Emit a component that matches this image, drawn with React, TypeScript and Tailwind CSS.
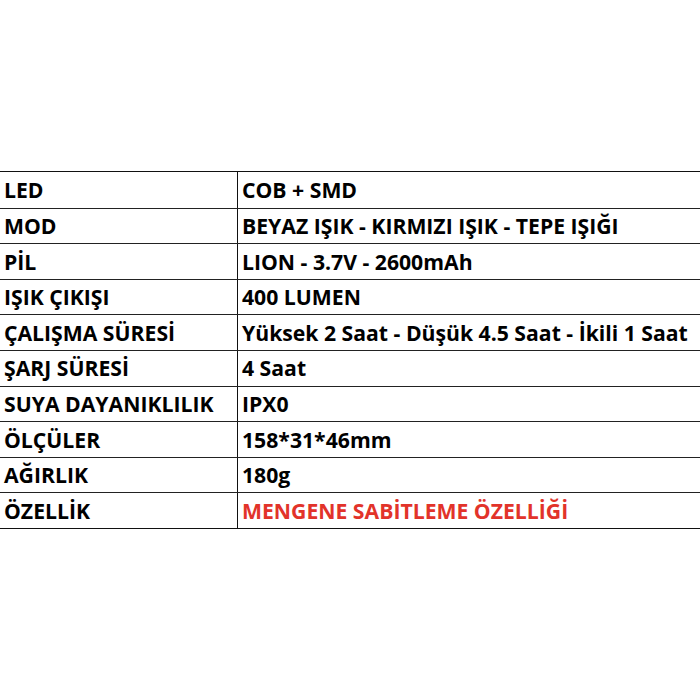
import React from 'react'

interface SpecRow {
  label: string
  value: string
  highlight?: boolean
}

const rows: SpecRow[] = [
  { label: 'LED', value: 'COB + SMD' },
  { label: 'MOD', value: 'BEYAZ IŞIK - KIRMIZI IŞIK - TEPE IŞIĞI' },
  { label: 'PİL', value: 'LION - 3.7V - 2600mAh' },
  { label: 'IŞIK ÇIKIŞI', value: '400 LUMEN' },
  { label: 'ÇALIŞMA SÜRESİ', value: 'Yüksek 2 Saat - Düşük 4.5 Saat - İkili 1 Saat' },
  { label: 'ŞARJ SÜRESİ', value: '4 Saat' },
  { label: 'SUYA DAYANIKLILIK', value: 'IPX0' },
  { label: 'ÖLÇÜLER', value: '158*31*46mm' },
  { label: 'AĞIRLIK', value: '180g' },
  { label: 'ÖZELLİK', value: 'MENGENE SABİTLEME ÖZELLİĞİ', highlight: true },
]

export default function App() {
  return (
    <div className="flex h-[700px] w-[700px] items-center bg-white">
      <div
        className="w-full border-y border-[#111] text-[21.2px] font-bold text-black"
        style={{ fontFamily: '"Open Sans", Lato, sans-serif' }}
      >
        {rows.map((row, i) => (
          <div
            key={row.label}
            className={`grid h-[35.6px] grid-cols-[237px_1fr] ${i > 0 ? 'border-t border-[#222]' : ''}`}
          >
            <div className="flex items-center pl-[4px] whitespace-nowrap">{row.label}</div>
            <div
              className={`flex items-center border-l border-[#111] pl-[4px] whitespace-nowrap ${row.highlight ? 'text-[#e2332a]' : ''}`}
            >
              {row.value}
            </div>
          </div>
        ))}
      </div>
    </div>
  )
}
